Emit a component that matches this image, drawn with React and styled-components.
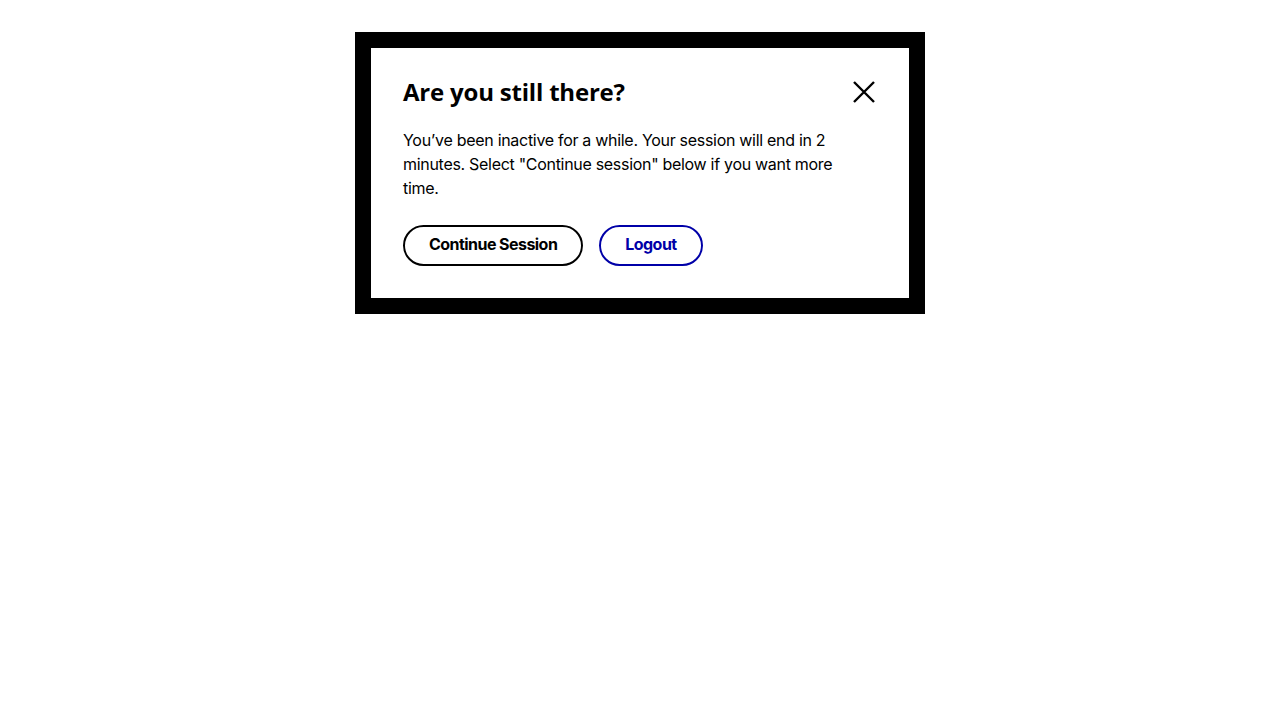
import React from 'react';
import styled, { createGlobalStyle } from 'styled-components';

const Global = createGlobalStyle`
	body {
		margin: 0;
		background: #fff;
		font-family: "Inter", "Liberation Sans", sans-serif;
		color: #000;
	}
`;

const Page = styled.div`
	display: flex;
	justify-content: center;
	padding-top: 32px;
`;

const Dialog = styled.div`
	box-sizing: border-box;
	width: 570px;
	border: 16px solid #000;
	background: #fff;
	padding: 32px;
`;

const Header = styled.div`
	display: flex;
	justify-content: space-between;
	align-items: flex-start;
`;

const Title = styled.h2`
	margin: 0;
	font-family: "Open Sans", "Liberation Sans", sans-serif;
	font-size: 24px;
	line-height: 24px;
	font-weight: 700;
	letter-spacing: -0.2px;
`;

const Close = styled.button`
	width: 24px;
	height: 24px;
	padding: 0;
	margin: 0 1px 0 0;
	border: 0;
	background: none;
	cursor: pointer;
	display: flex;
`;

const Body = styled.p`
	margin: 24px 0 25px;
	max-width: 445px;
	font-size: 16px;
	line-height: 24px;
	letter-spacing: -0.3px;
`;

const Actions = styled.div`
	display: flex;
	gap: 16px;
`;

const Button = styled.button`
	box-sizing: border-box;
	height: 41px;
	padding: 0 24px 3px;
	border: 2px solid ${p => p.color};
	border-radius: 999px;
	background: #fff;
	color: ${p => p.color};
	font-family: "Inter", "Liberation Sans", sans-serif;
	font-size: 16px;
	font-weight: 700;
	letter-spacing: -0.55px;
	cursor: pointer;
`;

const App = () => (
	<Page>
		<Global />
		<Dialog role="dialog">
			<Header>
				<Title>Are you still there?</Title>
				<Close aria-label="Close">
					<svg width="24" height="24" viewBox="0 0 24 24">
						<path d="M2 2 L22 22 M22 2 L2 22" stroke="#000" strokeWidth="2.4" />
					</svg>
				</Close>
			</Header>
			<Body>
				You’ve been inactive for a while. Your session will end in 2 minutes. Select "Continue session" below if you want more time.
			</Body>
			<Actions>
				<Button color="#000">Continue Session</Button>
				<Button color="#0000a8">Logout</Button>
			</Actions>
		</Dialog>
	</Page>
);

export default App;
